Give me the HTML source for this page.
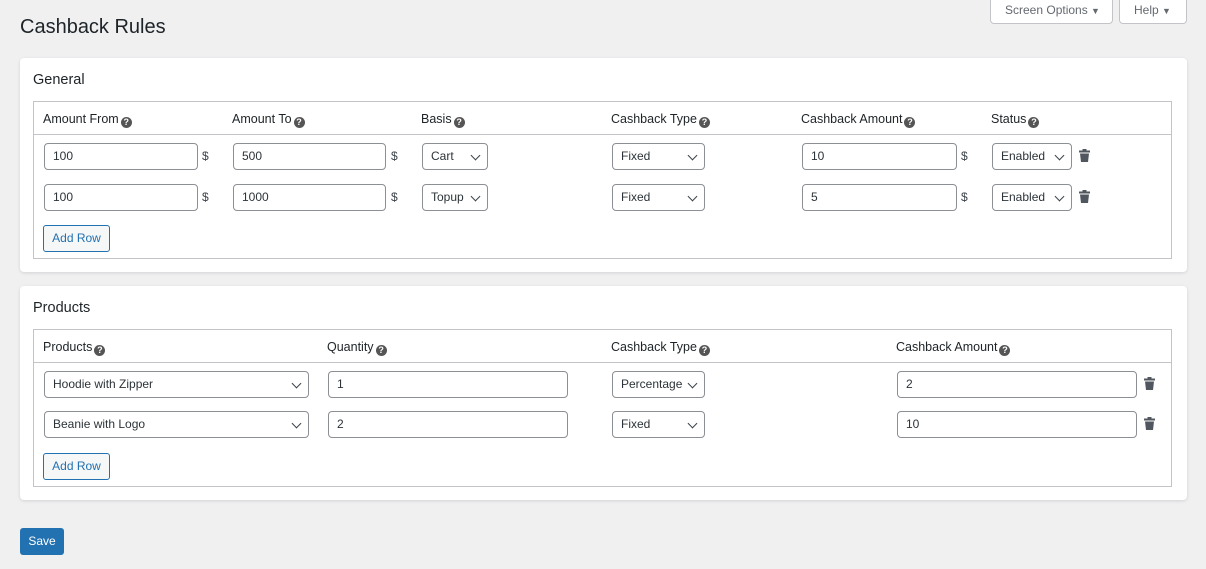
<!DOCTYPE html><html><head><style>
*{box-sizing:border-box;margin:0;padding:0}
body{width:1206px;height:569px;background:#f0f0f1;font-family:"Liberation Sans",sans-serif;font-size:12px;color:#3c434a;position:relative;overflow:hidden}
.a{position:absolute}
.card{position:absolute;left:20px;width:1167px;background:#fff;border-radius:4px;box-shadow:0 1px 3px rgba(0,0,0,.12)}
.tbl{position:absolute;left:13px;width:1139px;border:1px solid #c3c4c7}
.hl{position:absolute;left:0;right:0;height:1px;background:#c3c4c7}
.h{position:absolute;font-size:12.5px;color:#1d2327;white-space:nowrap}
.q{display:inline-block;width:11px;height:11px;border-radius:50%;background:#555;color:#fff;font-size:9px;font-weight:bold;text-align:center;line-height:11px;vertical-align:-2px;margin-left:2px}
.in{position:absolute;height:27px;border:1px solid #8c8f94;border-radius:4px;padding-left:8px;line-height:25px;color:#2c3338;font-size:12px;background:#fff}
.sel::after{content:"";position:absolute;right:8px;top:8px;width:6px;height:6px;border-right:1.5px solid #3c434a;border-bottom:1.5px solid #3c434a;transform:rotate(45deg)}
.d{position:absolute;color:#3c434a}
.tr{position:absolute;width:11px;height:13px}
.btn{position:absolute;height:27px;width:67px;text-align:center;border:1px solid #2271b1;border-radius:3px;background:#f6f7f7;color:#2271b1;font-size:12px;line-height:25px}
.top{position:absolute;top:-1px;height:25px;background:#fff;border:1px solid #c3c4c7;border-top:none;border-radius:0 0 4px 4px;color:#646970;font-size:12px;line-height:22px;padding:0 0 0 14px}
</style></head><body>
<div class="top" style="left:990px;width:123px">Screen Options <span style="font-size:9px">▼</span></div>
<div class="top" style="left:1119px;width:68px">Help <span style="font-size:9px">▼</span></div>
<div class="a" style="left:20px;top:16px;font-size:20px;color:#1d2327">Cashback Rules</div>

<svg width="0" height="0" style="position:absolute"><defs><symbol id="t" viewBox="0 0 11 13"><rect x="0" y="1.5" width="11" height="2" fill="#50575e"/><rect x="3.5" y="0" width="4" height="2" fill="#50575e"/><path d="M1 4.5h9l-1 8.5h-7z" fill="#50575e"/></symbol></defs></svg>

<div class="card" style="top:58px;height:214px">
<div class="a" style="left:13px;top:14px;font-size:14.5px;color:#1d2327">General</div>
<div class="tbl" style="top:43px;height:158px">
<div class="hl" style="top:32px"></div>
<div class="h" style="left:9px;top:10px">Amount From<span class="q">?</span></div>
<div class="h" style="left:198px;top:10px">Amount To<span class="q">?</span></div>
<div class="h" style="left:387px;top:10px">Basis<span class="q">?</span></div>
<div class="h" style="left:577px;top:10px">Cashback Type<span class="q">?</span></div>
<div class="h" style="left:767px;top:10px">Cashback Amount<span class="q">?</span></div>
<div class="h" style="left:957px;top:10px">Status<span class="q">?</span></div>

<div class="in" style="left:10px;top:41px;width:154px">100</div><div class="d" style="left:168px;top:47px">$</div>
<div class="in" style="left:199px;top:41px;width:153px">500</div><div class="d" style="left:357px;top:47px">$</div>
<div class="in sel" style="left:388px;top:41px;width:66px">Cart</div>
<div class="in sel" style="left:578px;top:41px;width:93px">Fixed</div>
<div class="in" style="left:768px;top:41px;width:155px">10</div><div class="d" style="left:927px;top:47px">$</div>
<div class="in sel" style="left:958px;top:41px;width:80px">Enabled</div>
<svg class="tr" style="left:1045px;top:47px"><use href="#t"/></svg>

<div class="in" style="left:10px;top:82px;width:154px">100</div><div class="d" style="left:168px;top:88px">$</div>
<div class="in" style="left:199px;top:82px;width:153px">1000</div><div class="d" style="left:357px;top:88px">$</div>
<div class="in sel" style="left:388px;top:82px;width:66px">Topup</div>
<div class="in sel" style="left:578px;top:82px;width:93px">Fixed</div>
<div class="in" style="left:768px;top:82px;width:155px">5</div><div class="d" style="left:927px;top:88px">$</div>
<div class="in sel" style="left:958px;top:82px;width:80px">Enabled</div>
<svg class="tr" style="left:1045px;top:88px"><use href="#t"/></svg>
<div class="btn" style="left:9px;top:123px">Add Row</div>
</div></div>

<div class="card" style="top:286px;height:214px">
<div class="a" style="left:13px;top:14px;font-size:14.5px;color:#1d2327">Products</div>
<div class="tbl" style="top:43px;height:158px">
<div class="hl" style="top:32px"></div>
<div class="h" style="left:9px;top:10px">Products<span class="q">?</span></div>
<div class="h" style="left:293px;top:10px">Quantity<span class="q">?</span></div>
<div class="h" style="left:577px;top:10px">Cashback Type<span class="q">?</span></div>
<div class="h" style="left:862px;top:10px">Cashback Amount<span class="q">?</span></div>

<div class="in sel" style="left:10px;top:41px;width:265px">Hoodie with Zipper</div>
<div class="in" style="left:294px;top:41px;width:240px">1</div>
<div class="in sel" style="left:578px;top:41px;width:93px">Percentage</div>
<div class="in" style="left:863px;top:41px;width:240px">2</div>
<svg class="tr" style="left:1110px;top:47px"><use href="#t"/></svg>

<div class="in sel" style="left:10px;top:81px;width:265px">Beanie with Logo</div>
<div class="in" style="left:294px;top:81px;width:240px">2</div>
<div class="in sel" style="left:578px;top:81px;width:93px">Fixed</div>
<div class="in" style="left:863px;top:81px;width:240px">10</div>
<svg class="tr" style="left:1110px;top:87px"><use href="#t"/></svg>
<div class="btn" style="left:9px;top:123px">Add Row</div>
</div></div>

<div class="a" style="left:20px;top:528px;width:44px;height:27px;background:#2271b1;border-radius:3px;color:#fff;font-size:12px;line-height:27px;text-align:center">Save</div>
</body></html>
